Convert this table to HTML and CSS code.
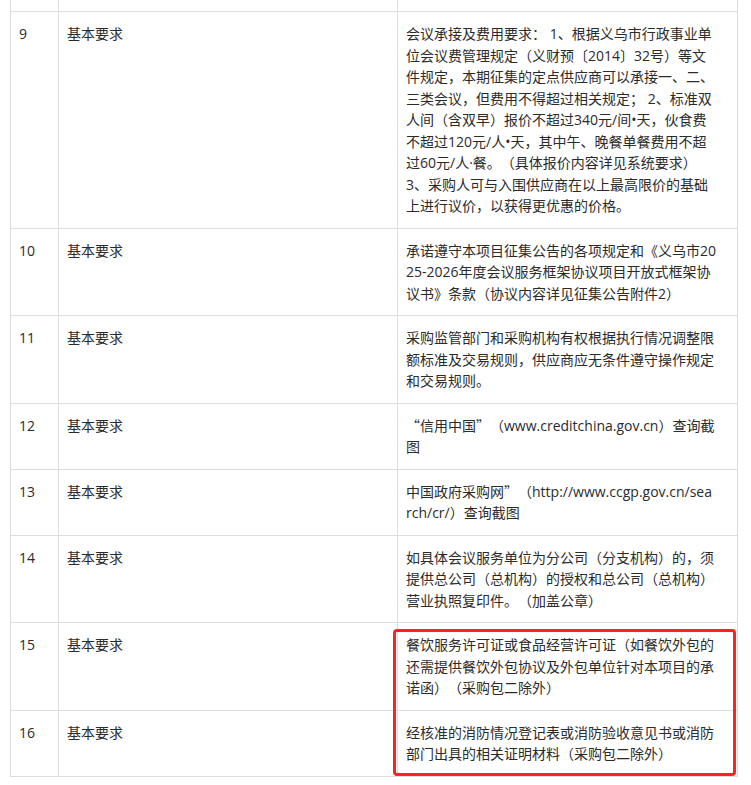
FILE: index.html
```html
<!DOCTYPE html>
<html lang="zh-CN">
<head>
<meta charset="utf-8">
<title>基本要求</title>
<link rel="stylesheet" href="styles.css">
</head>
<body>
<div class="sheet">
  <table class="req">
    <colgroup>
      <col class="c-no">
      <col class="c-type">
      <col class="c-desc">
    </colgroup>
    <tbody>
      <tr class="spacer"><td></td><td></td><td></td></tr>
      <tr>
        <td>9</td>
        <td>基本要求</td>
        <td>会议承接及费用要求： 1、根据义乌市行政事业单位会议费管理规定（义财预〔2014〕32号）等文件规定，本期征集的定点供应商可以承接一、二、三类会议，但费用不得超过相关规定； 2、标准双人间（含双早）报价不超过340元/间•天，伙食费不超过120元/人•天，其中午、晚餐单餐费用不超过60元/人·餐。（具体报价内容详见系统要求）<br>3、采购人可与入围供应商在以上最高限价的基础上进行议价，以获得更优惠的价格。</td>
      </tr>
      <tr>
        <td>10</td>
        <td>基本要求</td>
        <td>承诺遵守本项目征集公告的各项规定和《义乌市2025-2026年度会议服务框架协议项目开放式框架协议书》条款（协议内容详见征集公告附件2）</td>
      </tr>
      <tr>
        <td>11</td>
        <td>基本要求</td>
        <td>采购监管部门和采购机构有权根据执行情况调整限额标准及交易规则，供应商应无条件遵守操作规定和交易规则。</td>
      </tr>
      <tr>
        <td>12</td>
        <td>基本要求</td>
        <td><span class="cjk">“</span>信用中国<span class="cjk">”</span>（www.creditchina.gov.cn）查询截图</td>
      </tr>
      <tr>
        <td>13</td>
        <td>基本要求</td>
        <td>中国政府采购网<span class="cjk">”</span>（http://www.ccgp.gov.cn/search/cr/）查询截图</td>
      </tr>
      <tr>
        <td>14</td>
        <td>基本要求</td>
        <td>如具体会议服务单位为分公司（分支机构）的，须提供总公司（总机构）的授权和总公司（总机构）营业执照复印件。（加盖公章）</td>
      </tr>
      <tr>
        <td>15</td>
        <td>基本要求</td>
        <td>餐饮服务许可证或食品经营许可证（如餐饮外包的还需提供餐饮外包协议及外包单位针对本项目的承诺函）（采购包二除外）</td>
      </tr>
      <tr>
        <td>16</td>
        <td>基本要求</td>
        <td>经核准的消防情况登记表或消防验收意见书或消防部门出具的相关证明材料（采购包二除外）</td>
      </tr>
    </tbody>
  </table>
  <div class="mark"></div>
</div>
</body>
</html>
```

FILE: styles.css
```css
html, body {
  margin: 0;
  padding: 0;
  background: #ffffff;
}

.sheet {
  position: relative;
  padding-left: 10px;
}

.req {
  border-collapse: collapse;
  table-layout: fixed;
  width: 727px;
  font-family: "Open Sans", "Noto Sans CJK SC", sans-serif;
  font-size: 14px;
  line-height: 21.5px;
  color: #2b2b2b;
  text-spacing-trim: space-all;
}

.c-no { width: 48px; }
.c-type { width: 339px; }
.c-desc { width: 340px; }

.req td {
  border: 1px solid #dddddd;
  padding: 11px 8px;
  vertical-align: top;
  word-break: break-all;
}

.req td:nth-child(3) {
  padding-right: 20px;
}

.req .spacer td {
  border-top: none;
  height: 11px;
  padding: 0;
}

.cjk {
  font-family: "Noto Sans CJK SC", sans-serif;
}

.mark {
  position: absolute;
  left: 393px;
  top: 629px;
  width: 337px;
  height: 141px;
  border: 3px solid #ff2020;
  border-radius: 4px;
}
```
